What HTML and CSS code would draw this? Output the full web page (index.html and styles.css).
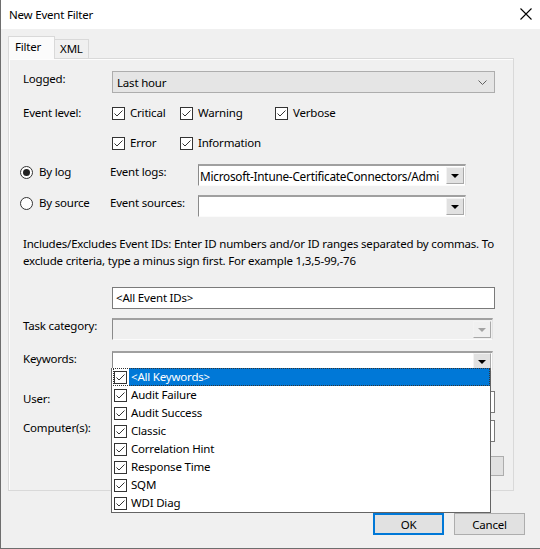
FILE: index.html
```html
<!DOCTYPE html>
<html lang="en">
<head>
    <meta charset="UTF-8">
    <title>New Event Filter</title>
    <link rel="stylesheet" href="styles.css">
</head>
<body>

    <div class="window">
        <!-- Title bar -->
        <div class="titlebar">
            <span class="title">New Event Filter</span>
            <svg class="close" width="12" height="12" viewBox="0 0 12 12">
                <path d="M0.5 0.5 L11.5 11.5 M11.5 0.5 L0.5 11.5" stroke="#000" stroke-width="1.1" fill="none"/>
            </svg>
        </div>

        <div class="dialog-body">
            <div class="tabs">
                <div class="tab active">Filter</div>
                <div class="tab">XML</div>
            </div>

            <div class="panel">
                <div class="row row-logged">
                    <span class="label">Logged:</span>
                    <div class="combo modern">
                        <span>Last hour</span>
                        <svg class="chevron" width="9" height="5" viewBox="0 0 9 5"><path d="M0.5 0.5 L4.5 4.5 L8.5 0.5" stroke="#606060" fill="none"/></svg>
                    </div>
                </div>

                <div class="row row-level1">
                    <span class="label">Event level:</span>
                    <label class="check w68"><span class="box"><svg width="11" height="11" viewBox="0 0 11 11"><path d="M1.5 5.5 L4 8 L9.5 2.5" stroke="#333" fill="none"/></svg></span>Critical</label>
                    <label class="check w95"><span class="box"><svg width="11" height="11" viewBox="0 0 11 11"><path d="M1.5 5.5 L4 8 L9.5 2.5" stroke="#333" fill="none"/></svg></span>Warning</label>
                    <label class="check"><span class="box"><svg width="11" height="11" viewBox="0 0 11 11"><path d="M1.5 5.5 L4 8 L9.5 2.5" stroke="#333" fill="none"/></svg></span>Verbose</label>
                </div>
                <div class="row row-level2">
                    <span class="label"></span>
                    <label class="check w68"><span class="box"><svg width="11" height="11" viewBox="0 0 11 11"><path d="M1.5 5.5 L4 8 L9.5 2.5" stroke="#333" fill="none"/></svg></span>Error</label>
                    <label class="check"><span class="box"><svg width="11" height="11" viewBox="0 0 11 11"><path d="M1.5 5.5 L4 8 L9.5 2.5" stroke="#333" fill="none"/></svg></span>Information</label>
                </div>

                <div class="row row-bylog">
                    <label class="radio"><span class="dot checked"></span>By log</label>
                    <span class="label short">Event logs:</span>
                    <div class="combo classic">
                        <span class="value">Microsoft-Intune-CertificateConnectors/Admi</span>
                        <span class="drop-btn"><i class="tri"></i></span>
                    </div>
                </div>
                <div class="row row-bysource">
                    <label class="radio"><span class="dot"></span>By source</label>
                    <span class="label short">Event sources:</span>
                    <div class="combo classic">
                        <span class="value"></span>
                        <span class="drop-btn"><i class="tri"></i></span>
                    </div>
                </div>

                <p class="hint">Includes/Excludes Event IDs: Enter ID numbers and/or ID ranges separated by commas. To<br>exclude criteria, type a minus sign first. For example 1,3,5-99,-76</p>

                <div class="row row-ids">
                    <span class="label"></span>
                    <div class="textbox wide">&lt;All Event IDs&gt;</div>
                </div>

                <div class="row row-task">
                    <span class="label">Task category:</span>
                    <div class="combo classic disabled">
                        <span class="value"></span>
                        <span class="drop-btn"><i class="tri"></i></span>
                    </div>
                </div>

                <div class="row row-keywords">
                    <span class="label">Keywords:</span>
                    <div class="combo classic">
                        <span class="value"></span>
                        <span class="drop-btn"><i class="tri"></i></span>
                    </div>
                </div>

                <div class="row row-user">
                    <span class="label">User:</span>
                    <div class="textbox wide"></div>
                </div>
                <div class="row row-computer">
                    <span class="label">Computer(s):</span>
                    <div class="textbox wide"></div>
                </div>
                <div class="row row-clear">
                    <button class="btn clear">Clear</button>
                </div>

                <!-- open Keywords dropdown -->
                <ul class="dropdown-list">
                    <li class="selected"><span class="box"><svg width="11" height="11" viewBox="0 0 11 11"><path d="M1.5 5.5 L4 8 L9.5 2.5" stroke="#333" fill="none"/></svg></span><span class="text">&lt;All Keywords&gt;</span></li>
                    <li><span class="box"><svg width="11" height="11" viewBox="0 0 11 11"><path d="M1.5 5.5 L4 8 L9.5 2.5" stroke="#333" fill="none"/></svg></span><span class="text">Audit Failure</span></li>
                    <li><span class="box"><svg width="11" height="11" viewBox="0 0 11 11"><path d="M1.5 5.5 L4 8 L9.5 2.5" stroke="#333" fill="none"/></svg></span><span class="text">Audit Success</span></li>
                    <li><span class="box"><svg width="11" height="11" viewBox="0 0 11 11"><path d="M1.5 5.5 L4 8 L9.5 2.5" stroke="#333" fill="none"/></svg></span><span class="text">Classic</span></li>
                    <li><span class="box"><svg width="11" height="11" viewBox="0 0 11 11"><path d="M1.5 5.5 L4 8 L9.5 2.5" stroke="#333" fill="none"/></svg></span><span class="text">Correlation Hint</span></li>
                    <li><span class="box"><svg width="11" height="11" viewBox="0 0 11 11"><path d="M1.5 5.5 L4 8 L9.5 2.5" stroke="#333" fill="none"/></svg></span><span class="text">Response Time</span></li>
                    <li><span class="box"><svg width="11" height="11" viewBox="0 0 11 11"><path d="M1.5 5.5 L4 8 L9.5 2.5" stroke="#333" fill="none"/></svg></span><span class="text">SQM</span></li>
                    <li><span class="box"><svg width="11" height="11" viewBox="0 0 11 11"><path d="M1.5 5.5 L4 8 L9.5 2.5" stroke="#333" fill="none"/></svg></span><span class="text">WDI Diag</span></li>
                </ul>
            </div>

            <div class="buttons">
                <button class="btn default">OK</button>
                <button class="btn">Cancel</button>
            </div>
        </div>
    </div>

</body>
</html>
```

FILE: styles.css
```css
/* Base */
* {
    box-sizing: border-box;
}

body {
    margin: 0;
    font-family: "Noto Sans", "Open Sans", sans-serif;
    font-size: 11.5px;
    letter-spacing: -0.2px;
    color: #000;
    background: #f0f0f0;
}

/* Window frame */
.window {
    width: 540px;
    height: 549px;
    border-left: 1px solid #6e6e6e;
    border-bottom: 1px solid #6e6e6e;
    background: #f0f0f0;
    overflow: hidden;
}

.titlebar {
    height: 29px;
    background: #fff;
    display: flex;
    align-items: center;
    justify-content: space-between;
    padding: 0 7px 1px 8px;
}

.close {
    margin-right: 1px;
}

.dialog-body {
    padding: 7px 0 0 7px;
}

/* Tabs */
.tabs {
    display: flex;
    align-items: flex-end;
    height: 22px;
}

.tab {
    height: 19px;
    line-height: 17px;
    padding: 0 5px 0 5px;
    border: 1px solid #d9d9d9;
    border-bottom: none;
    border-left: none;
}

.tab.active {
    height: 23px;
    margin-bottom: -1px;
    padding: 0 13px 0 6px;
    line-height: 20px;
    background: #fbfbfb;
    border-left: 1px solid #d9d9d9;
    position: relative;
    z-index: 1;
}

.panel {
    position: relative;
    width: 506px;
    height: 433px;
    border: 1px solid #d9d9d9;
    box-shadow: inset 1px 1px 0 #fdfdfd;
    padding: 12px 0 0 14px;
}

/* Form rows */
.row {
    display: flex;
    align-items: flex-start;
}

.label {
    width: 89px;
    flex-shrink: 0;
    line-height: 16px;
}

.label.short {
    width: 88px;
    margin-left: -1px;
}

.row-level1 { margin-top: 13px; }
.row-level2 { margin-top: 15px; }
.row-bylog { margin-top: 14px; }
.row-bysource { margin-top: 9px; }
.row-ids { margin-top: 18px; }
.row-task { margin-top: 9px; }
.row-keywords { margin-top: 11px; }
.row-user { margin-top: 20px; }
.row-computer { margin-top: 7px; }
.row-clear { margin-top: 14px; justify-content: flex-end; width: 481px; }

.row-level1 .label,
.row-level2 .label {
    margin-top: -1px;
}

/* Checkboxes and radios */
.check {
    display: flex;
    align-items: center;
    height: 14px;
    line-height: 14px;
}

.w68 { width: 68px; }
.w95 { width: 95px; }

.box {
    width: 13px;
    height: 13px;
    border: 1px solid #333;
    background: #fff;
    margin-right: 5px;
    display: flex;
    align-items: center;
    justify-content: center;
    flex-shrink: 0;
}

.radio {
    width: 91px;
    margin-left: -3px;
    display: flex;
    align-items: center;
    line-height: 16px;
}

.dot {
    width: 13px;
    height: 13px;
    border: 1px solid #333;
    border-radius: 50%;
    background: #fff;
    margin-right: 6px;
    position: relative;
}

.dot.checked::after {
    content: "";
    position: absolute;
    left: 2px;
    top: 2px;
    width: 7px;
    height: 7px;
    border-radius: 50%;
    background: #222;
}

/* Combos and text boxes */
.combo {
    display: flex;
    align-items: center;
    justify-content: space-between;
}

.combo.modern {
    width: 383px;
    height: 22px;
    background: #e5e5e5;
    border: 1px solid #adadad;
    padding: 0 7px 0 4px;
}

.combo.classic {
    width: 268px;
    height: 22px;
    background: #fff;
    border-top: 2px solid #a0a0a0;
    border-left: 1px solid #8a8a8a;
    border-right: 1px solid #e3e3e3;
    border-bottom: 1px solid #fbfbfb;
    padding: 0 1px 0 1px;
}

.row-task .combo.classic,
.row-keywords .combo.classic {
    width: 381px;
}

.row-keywords .combo.classic {
    height: 20px;
}

.combo.disabled {
    background: #f0f0f0;
}

.combo .value {
    white-space: nowrap;
    overflow: hidden;
    font-size: 11.8px;
    letter-spacing: -0.25px;
}

.drop-btn {
    width: 18px;
    height: 17px;
    background: #e1e1e1;
    border: 1px solid #f3f3f3;
    border-right-color: #a8a8a8;
    border-bottom-color: #a8a8a8;
    display: flex;
    align-items: center;
    justify-content: center;
    flex-shrink: 0;
}

.tri {
    width: 0;
    height: 0;
    border-left: 4px solid transparent;
    border-right: 4px solid transparent;
    border-top: 4px solid #000;
}

.combo.disabled .drop-btn {
    background: #f0f0f0;
}

.combo.disabled .tri {
    border-top-color: #a3a3a3;
}

.textbox {
    height: 22px;
    background: #fff;
    border: 1px solid #7a7a7a;
    line-height: 20px;
    padding-left: 3px;
}

.textbox.wide {
    width: 383px;
}

.hint {
    margin: 18px 0 0 0;
    line-height: 17px;
    white-space: nowrap;
}

/* Buttons */
.btn {
    font-family: inherit;
    font-size: 11.5px;
    letter-spacing: -0.2px;
    width: 71px;
    height: 22px;
    background: #e1e1e1;
    border: 1px solid #adadad;
    padding: 0;
    color: #000;
}

.btn.default {
    border: 2px solid #0078d7;
}

.btn.clear {
    width: 75px;
    height: 20px;
}

.buttons {
    width: 517px;
    margin-top: 22px;
    display: flex;
    justify-content: flex-end;
    gap: 10px;
}

/* Open dropdown list */
.dropdown-list {
    position: absolute;
    left: 102px;
    top: 309px;
    width: 380px;
    margin: 0;
    padding: 0 0 0 1px;
    list-style: none;
    background: #fff;
    border: 1px solid #646464;
    border-top: none;
}

.dropdown-list li {
    height: 18px;
    display: flex;
    align-items: center;
    padding-left: 1px;
}

.dropdown-list .box {
    margin-right: 2px;
}

.dropdown-list .text {
    flex: 1;
    height: 18px;
    line-height: 18px;
    padding-left: 2px;
}

.dropdown-list li.selected {
    outline: 1px dotted #333;
    outline-offset: -1px;
}

.dropdown-list li.selected .text {
    background: #0078d7;
    color: #fff;
}
```
